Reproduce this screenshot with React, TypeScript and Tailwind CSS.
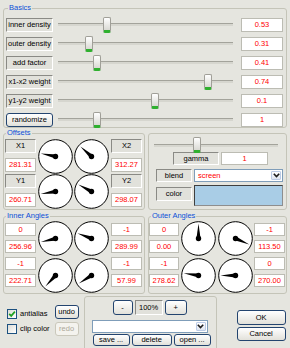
import React from "react"

const sunken =
  "flex items-center justify-center bg-[#e1e1db] border border-t-[#8a8a85] border-l-[#8a8a85] border-r-white border-b-white"
const field = "flex items-center justify-center bg-white border border-[#bcbcb3] text-[#ff0000]"
const btn =
  "flex items-center justify-center rounded-[3px] border border-[#23446f] bg-linear-to-b from-white to-[#e2e1da]"
const group = "border border-[#c4c4b8] rounded-[3px]"
const legend = "ml-[2px] px-[1px] leading-[10px] text-[#0b4fd8]"

const basics = [
  { label: "inner density", value: "0.53", thumb: 54 },
  { label: "outer density", value: "0.31", thumb: 36 },
  { label: "add factor", value: "0.41", thumb: 44 },
  { label: "x1-x2 weight", value: "0.74", thumb: 155 },
  { label: "y1-y2 weight", value: "0.1", thumb: 102 },
  { label: "randomize", value: "1", thumb: 44, button: true },
]

function Slider({ thumb, className }: { thumb: number; className: string }) {
  return (
    <div className={"relative flex items-center self-stretch " + className}>
      <div className="h-[3px] w-full border-t border-[#a3a39b] border-b-white bg-[#d6d6cf]" />
      <div
        className="absolute top-1/2 h-[16px] w-[8px] -translate-y-1/2 rounded-[2px] border border-[#a09f98] border-b-[3px] border-b-[#2fb02f] bg-linear-to-b from-white to-[#d9d9d3]"
        style={{ left: thumb - 4 }}
      />
    </div>
  )
}

// angle: degrees clockwise from 12 o'clock
function Dial({ angle }: { angle: number }) {
  const c = 17.5
  const rad = (angle * Math.PI) / 180
  const dx = Math.sin(rad)
  const dy = -Math.cos(rad)
  const tip = `${c + 15 * dx},${c + 15 * dy}`
  const b1 = `${c - 2.2 * dy - dx},${c + 2.2 * dx - dy}`
  const b2 = `${c + 2.2 * dy - dx},${c - 2.2 * dx - dy}`
  return (
    <svg width="35" height="35" viewBox="0 0 35 35" className="block">
      <circle cx={c} cy={c} r="16.8" fill="white" stroke="black" strokeWidth="1" />
      <polygon points={`${tip} ${b1} ${b2}`} fill="black" />
      <circle cx={c} cy={c} r="2.7" fill="black" />
    </svg>
  )
}

function Chevron() {
  return (
    <svg width="7" height="5" viewBox="0 0 7 5">
      <path d="M0.8 0.8 L3.5 3.6 L6.2 0.8" fill="none" stroke="#1d1d1d" strokeWidth="1.6" />
    </svg>
  )
}

function Combo({ text, className }: { text?: string; className: string }) {
  return (
    <div className={"flex items-stretch bg-white border border-[#7f9db9] " + className}>
      <div className="flex flex-1 items-center pl-[3px] text-[#ff0000]">{text}</div>
      <div className="m-[1px] flex w-[10px] items-center justify-center rounded-[1px] border border-[#bccbe6] bg-linear-to-b from-white to-[#dfe5f0]">
        <Chevron />
      </div>
    </div>
  )
}

function Pair({ label, value }: { label: string; value: string }) {
  return (
    <div className="flex h-[35px] flex-col gap-[5px]">
      <div className={sunken + " h-[14px]"}>{label}</div>
      <div className={field + " h-[14px]"}>{value}</div>
    </div>
  )
}

function Boxes({ values, className }: { values: string[]; className: string }) {
  return (
    <div className={"flex flex-col gap-[4px] pt-[2px] " + className}>
      {values.map((v, i) => (
        <div key={i} className={field + " h-[13px]"}>
          {v}
        </div>
      ))}
    </div>
  )
}

export default function App() {
  return (
    <div className="relative h-[348px] w-[290px] overflow-hidden bg-[#e5e5df] px-[3px] pt-[3px] font-['Liberation_Sans',Arial,sans-serif] text-[7.5px] leading-none text-black">
      <fieldset className={group + " w-[284px] pl-[2px] pr-[3px] pt-[4px]"}>
        <legend className={legend}>Basics</legend>
        <div className="flex flex-col gap-[4px]">
          {basics.map((row) => (
            <div key={row.label} className="flex h-[15px] items-center">
              <div className={(row.button ? btn : sunken) + " h-[14px] w-[47px]"}>{row.label}</div>
              <Slider thumb={row.thumb} className="w-[188px] pl-[5px] pr-[8px]" />
              <div className={field + " h-[14px] w-[42px]"}>{row.value}</div>
            </div>
          ))}
        </div>
      </fieldset>

      <div className="flex items-start gap-[3px]">
        <fieldset className={group + " w-[142px]"}>
          <legend className={legend}>Offsets</legend>
          <div className="flex pl-[1px] pt-[1px]">
            <div className="flex w-[31px] flex-col">
              <Pair label="X1" value="281.31" />
              <Pair label="Y1" value="260.71" />
            </div>
            <div className="ml-[2px] grid grid-cols-[35px_35px] gap-x-[1px]">
              <Dial angle={281.31} />
              <Dial angle={312.27} />
              <Dial angle={260.71} />
              <Dial angle={298.07} />
            </div>
            <div className="ml-[2px] flex w-[31px] flex-col">
              <Pair label="X2" value="312.27" />
              <Pair label="Y2" value="298.07" />
            </div>
          </div>
        </fieldset>

        <fieldset className={group + " mt-[5px] h-[77px] w-[139px] pt-[4px]"}>
          <Slider thumb={45} className="ml-[3px] h-[14px] w-[130px] pl-[2px] pr-[4px]" />
          <div className="flex h-[13px] pl-[24px]">
            <div className={sunken + " w-[46px]"}>gamma</div>
            <div className={field + " ml-[2px] w-[47px]"}>1</div>
          </div>
          <div className="mt-[4px] flex h-[13px] pl-[7px]">
            <div className={sunken + " w-[36px]"}>blend</div>
            <Combo text="screen" className="ml-[2px] w-[89px]" />
          </div>
          <div className="mt-[3px] flex items-start pl-[7px]">
            <div className={sunken + " mt-[2px] h-[14px] w-[36px]"}>color</div>
            <div className="ml-[2px] h-[21px] w-[89px] border border-t-[#3f3f3f] border-l-[#3f3f3f] border-r-[#8e8e8e] border-b-[#8e8e8e] bg-[#a9cde6]" />
          </div>
        </fieldset>
      </div>

      <div className="mt-[1px] flex items-start gap-[3px]">
        <fieldset className={group + " w-[142px]"}>
          <legend className={legend}>Inner Angles</legend>
          <div className="flex pl-[1px]">
            <Boxes values={["0", "256.96", "-1", "222.71"]} className="w-[31px]" />
            <div className="ml-[2px] grid grid-cols-[35px_35px] gap-x-[1px] gap-y-[2px]">
              <Dial angle={256.96} />
              <Dial angle={289.99} />
              <Dial angle={222.71} />
              <Dial angle={237.99} />
            </div>
            <Boxes values={["-1", "289.99", "-1", "57.99"]} className="ml-[2px] w-[31px]" />
          </div>
        </fieldset>

        <fieldset className={group + " w-[139px]"}>
          <legend className={legend}>Outer Angles</legend>
          <div className="flex">
            <Boxes values={["0", "0.00", "-1", "278.62"]} className="w-[30px]" />
            <div className="ml-[2px] grid grid-cols-[35px_35px] gap-x-[2px] gap-y-[2px]">
              <Dial angle={0} />
              <Dial angle={113.5} />
              <Dial angle={278.62} />
              <Dial angle={270} />
            </div>
            <Boxes values={["-1", "113.50", "0", "270.00"]} className="ml-[1px] w-[31px]" />
          </div>
        </fieldset>
      </div>

      <div className="flex h-[54px] items-start">
        <div className="ml-[4px] flex flex-col gap-[5px] pt-[15px]">
          <div className="flex h-[10px] items-center gap-[3px]">
            <div className="flex h-[10px] w-[10px] items-center justify-center border border-[#1c5180] bg-linear-to-br from-[#dcdcd6] to-white">
              <svg width="8" height="8" viewBox="0 0 8 8">
                <path d="M1.2 3.8 L3.2 5.9 L6.9 1.6" fill="none" stroke="#21a121" strokeWidth="1.7" />
              </svg>
            </div>
            <span>antialias</span>
          </div>
          <div className="flex h-[10px] items-center gap-[3px]">
            <div className="h-[10px] w-[10px] border border-[#1c5180] bg-linear-to-br from-[#dcdcd6] to-white" />
            <span>clip color</span>
          </div>
        </div>

        <div className="ml-[5px] flex flex-col gap-[3px] pt-[11px]">
          <div className={btn + " h-[14px] w-[24px]"}>undo</div>
          <div className="flex h-[14px] w-[24px] items-center justify-center rounded-[3px] border border-[#cac8bb] bg-[#f4f3ee] text-[#aca899]">
            redo
          </div>
        </div>

        <fieldset className={group + " ml-[5px] mt-[2px] h-[60px] w-[133px] pt-[3px]"}>
          <div className="flex h-[15px] pl-[28px]">
            <div className={btn + " w-[20px]"}>-</div>
            <div className={sunken + " ml-[2px] w-[28px]"}>100%</div>
            <div className={btn + " ml-[2px] w-[22px]"}>+</div>
          </div>
          <Combo className="ml-[7px] mt-[5px] h-[13px] w-[116px]" />
          <div className="mt-[1px] flex h-[12px] gap-[2px] pl-[8px]">
            <div className={btn + " w-[37px]"}>save ...</div>
            <div className={btn + " w-[40px]"}>delete</div>
            <div className={btn + " w-[37px]"}>open ...</div>
          </div>
        </fieldset>

        <div className="ml-[20px] flex flex-col gap-[2px] pt-[16px]">
          <div className={btn + " h-[15px] w-[49px]"}>OK</div>
          <div className={btn + " h-[14px] w-[49px]"}>Cancel</div>
        </div>
      </div>
    </div>
  )
}
